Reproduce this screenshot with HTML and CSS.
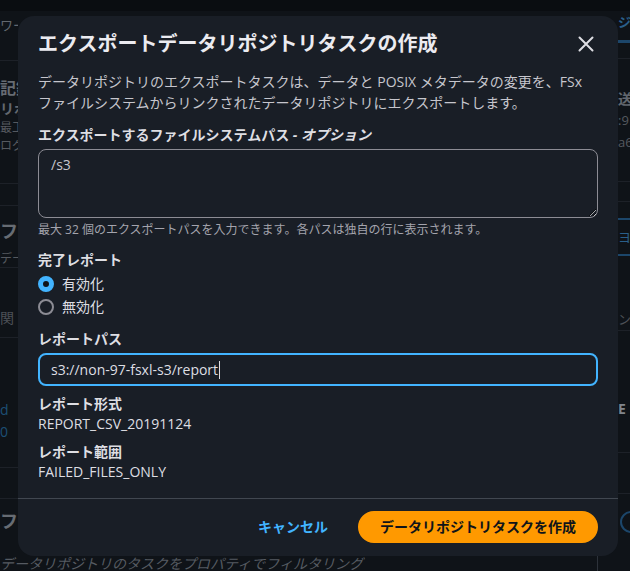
FILE: index.html
```html
<!DOCTYPE html>
<html lang="ja">
<head>
<meta charset="utf-8">
<title>エクスポートデータリポジトリタスクの作成</title>
<link rel="stylesheet" href="styles.css">
</head>
<body>
<div class="page">
  <aside class="strip strip-left" aria-hidden="true">
    <div class="ls-tab">ワー</div>
    <div class="ls-h">記録</div>
    <div class="ls-sub">リポ</div>
    <div class="ls-t">最工</div>
    <div class="ls-t">ログ</div>
    <div class="ls-div ls-div-a"></div>
    <div class="ls-div ls-div-b"></div>
    <div class="ls-big">フリ</div>
    <div class="ls-small">デー</div>
    <div class="ls-div"></div>
    <div class="ls-col">関</div>
    <div class="ls-div ls-div-c"></div>
    <div class="ls-link ls-link-a">d</div>
    <div class="ls-link">0</div>
    <div class="ls-div ls-div-d"></div>
    <div class="ls-div ls-div-e"></div>
    <div class="ls-big ls-big-b">フリ</div>
  </aside>

  <div class="modal" role="dialog" aria-labelledby="modal-title">
    <header class="modal-header">
      <h2 class="modal-title" id="modal-title">エクスポートデータリポジトリタスクの作成</h2>
      <button class="close-btn" type="button" aria-label="閉じる">
        <svg width="16" height="16" viewBox="0 0 16 16" aria-hidden="true">
          <path d="M1.5 1.5 L14.5 14.5 M14.5 1.5 L1.5 14.5" stroke="currentColor" stroke-width="2" stroke-linecap="round" fill="none"/>
        </svg>
      </button>
    </header>

    <div class="modal-body">
      <p class="desc">データリポジトリのエクスポートタスクは、データと POSIX メタデータの変更を、FSx<br>ファイルシステムからリンクされたデータリポジトリにエクスポートします。</p>

      <div class="field field-first">
        <label class="field-label" for="paths">エクスポートするファイルシステムパス <i class="optional">- オプション</i></label>
        <textarea class="textarea" id="paths">/s3</textarea>
        <div class="hint">最大 32 個のエクスポートパスを入力できます。各パスは独自の行に表示されます。</div>
      </div>

      <div class="field">
        <div class="field-label">完了レポート</div>
        <div class="radios">
          <div class="radio-row"><span class="radio radio-checked"></span><span class="radio-label">有効化</span></div>
          <div class="radio-row"><span class="radio"></span><span class="radio-label">無効化</span></div>
        </div>
      </div>

      <div class="field">
        <div class="field-label">レポートパス</div>
        <div class="input input-focused"><span class="input-text">s3://non-97-fsxl-s3/report</span><span class="caret"></span></div>
      </div>

      <div class="kv">
        <div class="field-label">レポート形式</div>
        <div class="kv-value">REPORT_CSV_20191124</div>
      </div>

      <div class="kv">
        <div class="field-label">レポート範囲</div>
        <div class="kv-value">FAILED_FILES_ONLY</div>
      </div>
    </div>

    <footer class="modal-footer">
      <button class="btn btn-link" type="button">キャンセル</button>
      <button class="btn btn-primary" type="button">データリポジトリタスクを作成</button>
    </footer>
  </div>

  <aside class="strip strip-right" aria-hidden="true">
    <div class="rs-tab">ジ</div>
    <div class="rs-line"></div>
    <div class="rs-h">送信</div>
    <div class="rs-t">:9</div>
    <div class="rs-t">a6</div>
    <div class="rs-div rs-div-a"></div>
    <div class="rs-div rs-div-b"></div>
    <div class="rs-box">ヨ</div>
    <div class="rs-t rs-n">ン</div>
    <div class="rs-div"></div>
    <div class="rs-e">E</div>
    <div class="rs-div rs-div-c"></div>
    <div class="rs-div rs-div-d"></div>
    <div class="rs-icon"></div>
  </aside>

  <div class="bottom-band" aria-hidden="true">
    <div class="filter">データリポジトリのタスクをプロパティでフィルタリング</div>
  </div>
</div>
</body>
</html>
```

FILE: styles.css
```css
* {
  box-sizing: border-box;
}

html,
body {
  margin: 0;
  padding: 0;
}

body {
  width: 630px;
  height: 571px;
  overflow: hidden;
  background: #0f1318;
  font-family: "Open Sans", "Noto Sans CJK JP", sans-serif;
}

.page {
  display: grid;
  grid-template-columns: 18px 600px 12px;
  grid-template-rows: 16px 540px 15px;
  width: 630px;
  height: 571px;
  background: linear-gradient(#0a0d11 0 11px, #0f1318 11px);
}

/* ---------- background page fragments ---------- */
.strip {
  grid-row: 1 / 3;
  display: flex;
  flex-direction: column;
  overflow: hidden;
  white-space: nowrap;
  color: #5a5f66;
  font-size: 12px;
  line-height: 18px;
}

.strip-left {
  grid-column: 1;
}

.strip-right {
  grid-column: 3;
}

.ls-tab {
  height: 61px;
  padding-top: 18px;
  font-size: 13px;
  line-height: 14px;
  color: #62676e;
  border-bottom: 1px solid #1d2128;
}

.ls-h {
  margin-top: 16px;
  font-size: 16px;
  line-height: 22px;
  font-weight: 700;
  color: #676c73;
}

.ls-sub {
  font-size: 14px;
  line-height: 20px;
  font-weight: 700;
  color: #62676e;
}

.ls-t {
  color: #55595f;
}

.ls-div {
  border-top: 1px solid #1d2128;
}

.ls-div-a {
  margin-top: 28px;
}

.ls-div-b {
  margin-top: 21px;
}

.ls-big {
  margin-top: 13px;
  font-size: 18px;
  line-height: 24px;
  font-weight: 700;
  color: #676c73;
}

.ls-small {
  margin-top: 8px;
  line-height: 16px;
  color: #55595f;
}

.ls-col {
  margin-top: 40px;
  font-size: 14px;
  line-height: 20px;
  color: #4c5056;
}

.ls-div-c {
  margin-top: 9px;
}

.ls-link {
  font-size: 14px;
  line-height: 22px;
  color: #1d4f75;
}

.ls-link-a {
  margin-top: 61px;
}

.ls-div-d {
  margin-top: 24px;
}

.ls-div-e {
  margin-top: 30px;
}

.ls-big-b {
  margin-top: 10px;
}

.rs-tab {
  margin-top: 14px;
  font-size: 13px;
  line-height: 16px;
  font-weight: 700;
  color: #2a5f8a;
}

.rs-line {
  margin-top: 10px;
  border-top: 3px solid #1c466a;
  height: 19px;
  border-bottom: 1px solid #1d2128;
}

.rs-h {
  margin-top: 30px;
  font-size: 14px;
  line-height: 20px;
  font-weight: 700;
  color: #62676e;
}

.rs-t {
  font-size: 13px;
  line-height: 22px;
  color: #55595f;
}

.rs-div {
  border-top: 1px solid #1d2128;
}

.rs-div-a {
  margin-top: 28px;
}

.rs-div-b {
  margin-top: 19px;
}

.rs-box {
  margin-top: 16px;
  height: 38px;
  border-top: 2px solid #1c466a;
  border-bottom: 2px solid #1c466a;
  font-size: 13px;
  line-height: 34px;
  color: #2a5f8a;
}

.rs-n {
  margin-top: 52px;
  color: #4c5056;
}

.rs-e {
  margin-top: 68px;
  font-size: 14px;
  line-height: 20px;
  font-weight: 700;
  color: #80858c;
}

.rs-div-c {
  margin-top: 33px;
}

.rs-div-d {
  margin-top: 40px;
}

.rs-icon {
  margin-top: 17px;
  margin-left: 2px;
  width: 22px;
  height: 22px;
  border: 2px solid #1c466a;
  border-radius: 50%;
}

.bottom-band {
  grid-column: 1 / 4;
  grid-row: 3;
  overflow: hidden;
}

.filter {
  width: 598px;
  height: 24px;
  margin-top: -3px;
  border-right: 1px solid #2d323a;
  font-size: 14px;
  line-height: 22px;
  font-style: italic;
  color: #565b62;
  white-space: nowrap;
}

/* ---------- modal ---------- */
.modal {
  grid-column: 2;
  grid-row: 2;
  display: flex;
  flex-direction: column;
  background: #191e26;
  border-radius: 16px;
  color: #c6c6cd;
}

.modal-header {
  display: flex;
  align-items: center;
  justify-content: space-between;
  padding: 16px 20px 0 20px;
}

.modal-title {
  margin: 0;
  font-size: 20px;
  line-height: 24px;
  font-weight: 700;
  color: #ebebf0;
}

.close-btn {
  display: flex;
  align-items: center;
  justify-content: center;
  width: 24px;
  height: 24px;
  padding: 0;
  border: 0;
  background: none;
  color: #dedee3;
}

.modal-body {
  display: flex;
  flex-direction: column;
  padding: 16px 20px 16px 20px;
}

.desc {
  margin: 0;
  font-size: 14px;
  line-height: 20.5px;
  color: #c6c6cd;
}

.field {
  display: flex;
  flex-direction: column;
  margin-top: 12px;
}

.field-first {
  margin-top: 12px;
}

.field-label {
  font-size: 14px;
  line-height: 20px;
  font-weight: 700;
  color: #dedee3;
}

.optional {
  font-style: italic;
}

.textarea {
  display: block;
  width: 100%;
  height: 69px;
  margin-top: 4px;
  padding: 5px 12px;
  border: 1px solid #8c8c94;
  border-radius: 8px;
  background: #191e26;
  color: #c6c6cd;
  font-family: "Open Sans", "Noto Sans CJK JP", sans-serif;
  font-size: 14px;
  line-height: 20px;
  resize: vertical;
  color-scheme: dark;
  outline: none;
}

.hint {
  margin-top: 4px;
  font-size: 12px;
  line-height: 16px;
  color: #a4a4ad;
}

.radios {
  display: flex;
  flex-direction: column;
  gap: 3px;
  margin-top: 4px;
}

.radio-row {
  display: flex;
  align-items: center;
  gap: 8px;
  height: 20px;
}

.radio {
  width: 16px;
  height: 16px;
  border: 2px solid #8c8c94;
  border-radius: 50%;
  flex: none;
}

.radio-checked {
  border: 5px solid #42b4ff;
  background: #0f141a;
}

.radio-label {
  font-size: 14px;
  line-height: 20px;
  color: #dedee3;
}

.input {
  display: flex;
  align-items: center;
  height: 33px;
  margin-top: 4px;
  padding: 0 11px;
  border-radius: 8px;
  border: 1px solid #8c8c94;
  font-size: 14px;
  color: #dedee3;
}

.input-focused {
  border: 2px solid #42b4ff;
}

.caret {
  width: 1px;
  height: 18px;
  margin-left: 1px;
  background: #dedee3;
}

.kv {
  display: flex;
  flex-direction: column;
  margin-top: 8px;
}

.kv-value {
  font-size: 14px;
  line-height: 20px;
  color: #dedee3;
}

.modal-footer {
  display: flex;
  justify-content: flex-end;
  align-items: center;
  gap: 8px;
  padding: 12px 20px 12px 20px;
  border-top: 1px solid #414750;
}

.btn {
  height: 32px;
  padding: 0 20px;
  border: 2px solid transparent;
  border-radius: 16px;
  font-family: "Open Sans", "Noto Sans CJK JP", sans-serif;
  font-size: 14px;
  line-height: 20px;
  font-weight: 700;
  cursor: pointer;
}

.btn-link {
  background: none;
  color: #42b4ff;
}

.btn-primary {
  background: #ff9900;
  border-color: #ff9900;
  color: #0f141a;
}
```
